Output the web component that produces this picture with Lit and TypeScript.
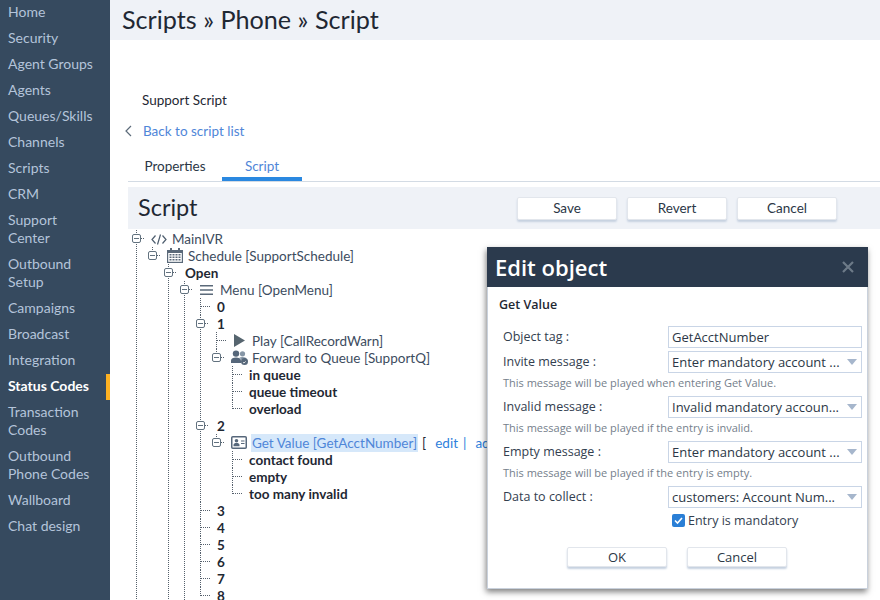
import {LitElement, html, css, nothing} from 'lit';
import {customElement} from 'lit/decorators.js';

const NAV = [
  'Home', 'Security', 'Agent Groups', 'Agents', 'Queues/Skills', 'Channels', 'Scripts', 'CRM',
  'Support Center', 'Outbound Setup', 'Campaigns', 'Broadcast', 'Integration', 'Status Codes',
  'Transaction Codes', 'Outbound Phone Codes', 'Wallboard', 'Chat design',
];

const ICONS: Record<string, unknown> = {
  code: html`<svg width="16" height="12" viewBox="0 0 16 12" fill="none" stroke="#4d5d6e" stroke-width="1.2"><path d="M4.5 2.5 1 6.5l3.5 4M11.5 2.5 15 6.5l-3.5 4M9.5 1.5l-3 10"/></svg>`,
  calendar: html`<svg width="16" height="15" viewBox="0 0 16 15"><path fill="#5a6979" d="M0 2h16v13H0z"/><path fill="#5a6979" d="M3 0h2v3H3zM11 0h2v3h-2z"/><path fill="#fff" d="M1.2 5h13.6v8.8H1.2z"/><path fill="#5a6979" d="M2.5 6h2v1.6h-2zM5.5 6h2v1.6h-2zM8.5 6h2v1.6h-2zM11.5 6h2v1.6h-2zM2.5 8.4h2V10h-2zM5.5 8.4h2V10h-2zM8.5 8.4h2V10h-2zM11.5 8.4h2V10h-2zM2.5 10.9h2v1.6h-2zM5.5 10.9h2v1.6h-2zM8.5 10.9h2v1.6h-2zM11.5 10.9h2v1.6h-2z"/></svg>`,
  menu: html`<svg width="16" height="12" viewBox="0 0 16 12" fill="#5a6979"><path d="M1 1h13v1.5H1zM1 5.2h13v1.5H1zM1 9.500h13V11H1z"/></svg>`,
  play: html`<svg width="16" height="13" viewBox="0 0 16 13" fill="#56656f"><path d="M3 0l11 6.500L3 13z"/></svg>`,
  queue: html`<svg width="18" height="15" viewBox="0 0 18 15"><circle cx="5" cy="3.6" r="3.2" fill="#56677a"/><path fill="#56677a" d="M0 13v-2.500C0 8.400 2.200 7.500 5 7.500s5 .9 5 3V13z"/><circle cx="11.500" cy="3.800" r="2.600" fill="#8696a6"/><path fill="#8696a6" d="M8 8c1-.6 2.200-.9 3.500-.9 2.200 0 4 .8 4 2.400v.5H10.600C10.200 9 9.200 8.400 8 8z"/><circle cx="13.500" cy="11.500" r="3.500" fill="#56677a"/><path d="M12 12.500c.8.400 2 .2 2.500-1" stroke="#fff" stroke-width="1" fill="none"/></svg>`,
  card: html`<svg width="16" height="13" viewBox="0 0 16 13"><rect x=".75" y=".75" width="14.500" height="11.500" rx="1" fill="#fff" stroke="#56677a" stroke-width="1.500"/><circle cx="5.500" cy="4.800" r="1.800" fill="#56677a"/><path fill="#56677a" d="M2.500 10.300V9c0-1.300 1.300-1.900 3-1.900s3 .6 3 1.900v1.300z"/><path fill="#56677a" d="M10 4.500h3.500v1H10zM10 7h3.500v1H10z"/></svg>`,
};

interface TreeNode {
  label: string;
  icon?: string;
  bold?: boolean;
  selected?: boolean;
  children?: TreeNode[];
  more?: boolean;
}

const leaf = (label: string): TreeNode => ({label, bold: true});

const TREE: TreeNode[] = [{
  label: 'MainIVR', icon: 'code', more: true,
  children: [{
    label: 'Schedule [SupportSchedule]', icon: 'calendar',
    children: [{
      label: 'Open', bold: true, more: true,
      children: [{
        label: 'Menu [OpenMenu]', icon: 'menu',
        children: [
          leaf('0'),
          {label: '1', bold: true, children: [
            {label: 'Play [CallRecordWarn]', icon: 'play'},
            {label: 'Forward to Queue [SupportQ]', icon: 'queue', children: [
              leaf('in queue'), leaf('queue timeout'), leaf('overload'),
            ]},
          ]},
          {label: '2', bold: true, children: [
            {label: 'Get Value [GetAcctNumber]', icon: 'card', selected: true, children: [
              leaf('contact found'), leaf('empty'), leaf('too many invalid'),
            ]},
          ]},
          leaf('3'), leaf('4'), leaf('5'), leaf('6'), leaf('7'), leaf('8'),
        ],
        more: true,
      }],
    }],
  }],
}];

const FIELDS = [
  {label: 'Invite message :', value: 'Enter mandatory account ...', hint: 'This message will be played when entering Get Value.'},
  {label: 'Invalid message :', value: 'Invalid mandatory accoun...', hint: 'This message will be played if the entry is invalid.'},
  {label: 'Empty message :', value: 'Enter mandatory account ...', hint: 'This message will be played if the entry is empty.'},
  {label: 'Data to collect :', value: 'customers: Account Num...', hint: ''},
];

@customElement('app-root')
export class AppRoot extends LitElement {
  static styles = css`
    :host {
      --dots-v: repeating-linear-gradient(to bottom, #55606c 0 1px, transparent 1px 2px);
      --dots-h: repeating-linear-gradient(to right, #55606c 0 1px, transparent 1px 2px);
      display: flex;
      position: relative;
      height: 600px;
      overflow: hidden;
      background: #fff;
      color: #2b3746;
      font-family: Lato, sans-serif;
      font-size: 13.5px;
    }
    .side {
      flex: none;
      width: 110px;
      background: #364a5f;
    }
    .side a {
      display: block;
      padding: 3px 16px 5px 8px;
      line-height: 18px;
      font-size: 14px;
      color: #b4c4da;
    }
    .side a.on {
      padding-right: 12px;
      border-right: 4px solid #fdb122;
      color: #fff;
      font-weight: 700;
    }
    .main {
      flex: 1;
      min-width: 0;
    }
    .top {
      height: 40px;
      padding-left: 12px;
      background: #eff2f7;
      font-size: 25.2px;
      line-height: 38px;
      color: #1f2833;
    }
    .body {
      padding-left: 18px;
    }
    .name {
      margin: 51px 0 0 14px;
      line-height: 18px;
      color: #1f2833;
    }
    .back {
      display: flex;
      align-items: center;
      margin-top: 13px;
      line-height: 18px;
      color: #4f86d8;
    }
    .back svg {
      margin-left: -6px;
      width: 14px;
    }
    .back span {
      margin-left: 7px;
    }
    .tabs {
      display: flex;
      margin-top: 12px;
      border-bottom: 1px solid #d3dbe4;
    }
    .tab {
      width: 94px;
      padding: 5px 0 2px;
      border-bottom: 4px solid transparent;
      line-height: 18px;
      text-align: center;
    }
    .tab.on {
      width: 80px;
      border-bottom-color: #2a88e0;
      color: #4f86d8;
    }
    .bar {
      display: flex;
      align-items: center;
      height: 42px;
      margin-top: 5px;
      padding: 0 43px 0 10px;
      background: #eff2f7;
    }
    .bar h2 {
      flex: 1;
      margin: 0 0 3px;
      font-size: 23.5px;
      font-weight: 400;
      color: #1f2833;
    }
    .btns {
      display: flex;
      gap: 10px;
    }
    button {
      width: 100px;
      height: 23px;
      padding: 0 0 1px;
      border: 1px solid #e2e6ec;
      border-radius: 2px;
      background: #fff;
      box-shadow: 0 2px 2px #c6d1e0;
      color: #2b3746;
      font: inherit;
    }
    .tree {
      margin: 1px 0 0 8px;
    }
    ul {
      margin: 0;
      padding: 0 0 0 15px;
      list-style: none;
    }
    .tree > ul {
      padding: 0;
    }
    li {
      position: relative;
      padding-left: 1px;
      margin-right: -1px;
      background: var(--dots-v) left top / 1px 100% no-repeat;
    }
    li.last {
      background-size: 1px 9px;
    }
    .row {
      display: flex;
      align-items: center;
      height: 17px;
      white-space: nowrap;
      color: #3c4c5e;
    }
    .conn {
      display: flex;
      flex: none;
      align-items: center;
      width: 16px;
    }
    .dash {
      width: 10px;
      height: 1px;
      background: var(--dots-h);
    }
    .toggle {
      position: relative;
      flex: none;
      box-sizing: border-box;
      width: 9px;
      height: 9px;
      margin-left: -5px;
      border: 1px solid #62727f;
      border-radius: 2px;
      background: #fff linear-gradient(#62727f, #62727f) center / 5px 1px no-repeat;
    }
    .toggle + .dash {
      width: 4px;
    }
    .icon {
      display: flex;
      flex: none;
      align-items: center;
      width: 21px;
      height: 15px;
      margin-left: -2px;
    }
    .bold {
      font-weight: 700;
      color: #1f2833;
    }
    .sel {
      padding: 0 1px;
      margin-left: -1px;
      line-height: 18px;
      background: #d6e8fa;
      color: #4f86d8;
    }
    .acts {
      margin-left: 4px;
      color: #1f2833;
    }
    .acts a {
      margin: 0 5px 0 9px;
      color: #2f7fdc;
    }
    .acts i {
      font-style: normal;
      color: #2f7fdc;
    }
    .dialog {
      position: absolute;
      left: 487px;
      top: 247px;
      box-sizing: border-box;
      width: 381px;
      padding-bottom: 21px;
      border: 1px solid #c9d1dc;
      border-top: 0;
      background: #fff;
      box-shadow: -1px 3px 6px rgba(0, 0, 0, 0.5);
      font-family: "Open Sans", sans-serif;
      font-size: 12.5px;
      color: #33404f;
    }
    .dhead {
      display: flex;
      align-items: center;
      justify-content: space-between;
      height: 39px;
      margin: 0 -1px;
      padding: 0 14px 1px 8px;
      background: #2b3a4d;
      color: #fff;
      font-size: 22px;
      font-weight: 600;
    }
    .dhead svg {
      display: block;
    }
    .dtitle {
      margin: 9px 0 12px 11px;
      line-height: 18px;
      font-weight: 600;
      color: #1f2833;
    }
    .form {
      display: grid;
      grid-template-columns: 165px 194px;
      padding-left: 15px;
    }
    .form label {
      line-height: 21px;
    }
    .field {
      display: flex;
      align-items: center;
      justify-content: space-between;
      box-sizing: border-box;
      height: 22px;
      margin-bottom: 3px;
      padding: 0 5px 0 3px;
      border: 1px solid #c9d5e6;
      font-size: 13px;
      color: #2b3746;
      white-space: nowrap;
    }
    .arrow {
      width: 0;
      height: 0;
      border: 5px solid transparent;
      border-top: 6px solid #a6b6cc;
      border-bottom: 0;
      margin: 0 -1px 0 0;
    }
    .hint {
      grid-column: 1 / 3;
      margin-top: -3px;
      height: 23px;
      font-size: 11px;
      line-height: 20px;
      color: #75808c;
    }
    .check {
      display: flex;
      grid-column: 2;
      align-items: center;
      gap: 3px;
      height: 18px;
      padding-left: 4px;
      font-size: 12.5px;
    }
    .actions {
      display: flex;
      justify-content: center;
      gap: 20px;
      margin: 18px 0 0 -1px;
    }
    .actions button {
      height: 20px;
      font-size: 13px;
    }
  `;

  private _node(node: TreeNode, last: boolean): unknown {
    const lastClass = last && !node.more ? 'last' : '';
    return html`
      <li class=${lastClass}>
        <div class="row">
          <span class="conn">
            ${node.children ? html`<span class="toggle"></span>` : nothing}
            <span class="dash"></span>
          </span>
          ${node.icon ? html`<span class="icon">${ICONS[node.icon]}</span>` : nothing}
          <span class=${node.bold ? 'bold' : node.selected ? 'sel' : ''}>${node.label}</span>
          ${node.selected
            ? html`<span class="acts">[<a>edit</a><i>|</i><a>add</a></span>`
            : nothing}
        </div>
        ${node.children ? this._list(node.children) : nothing}
      </li>
    `;
  }

  private _list(nodes: TreeNode[]): unknown {
    return html`<ul>${nodes.map((n, i) => this._node(n, i === nodes.length - 1))}</ul>`;
  }

  render() {
    return html`
      <nav class="side">
        ${NAV.map((n) => html`<a class=${n === 'Status Codes' ? 'on' : ''}>${n}</a>`)}
      </nav>
      <div class="main">
        <div class="top">Scripts » Phone » Script</div>
        <div class="body">
          <div class="name">Support Script</div>
          <div class="back">
            <svg height="12" viewBox="0 0 14 12" fill="none" stroke="#5c6b7a" stroke-width="1.200"><path d="M9 1 4 6l5 5"/></svg>
            <span>Back to script list</span>
          </div>
          <div class="tabs">
            <div class="tab">Properties</div>
            <div class="tab on">Script</div>
          </div>
          <div class="bar">
            <h2>Script</h2>
            <div class="btns">
              <button>Save</button>
              <button>Revert</button>
              <button>Cancel</button>
            </div>
          </div>
          <div class="tree">${this._list(TREE)}</div>
        </div>
      </div>
      <div class="dialog">
        <div class="dhead">
          <span>Edit object</span>
          <svg width="12" height="12" viewBox="0 0 12 12" stroke="#6d7a88" stroke-width="2.200"><path d="M1 1l10 10M11 1 1 11"/></svg>
        </div>
        <div class="dtitle">Get Value</div>
        <div class="form">
          <label>Object tag :</label>
          <div class="field">GetAcctNumber</div>
          ${FIELDS.map((f) => html`
            <label>${f.label}</label>
            <div class="field"><span>${f.value}</span><span class="arrow"></span></div>
            ${f.hint ? html`<div class="hint">${f.hint}</div>` : nothing}
          `)}
          <div class="check">
            <svg width="13" height="13" viewBox="0 0 13 13"><rect width="13" height="13" rx="2" fill="#2a7fd6"/><path d="M3 6.500l2.500 2.500L10 4" fill="none" stroke="#fff" stroke-width="1.600"/></svg>
            <span>Entry is mandatory</span>
          </div>
        </div>
        <div class="actions">
          <button>OK</button>
          <button>Cancel</button>
        </div>
      </div>
    `;
  }
}
